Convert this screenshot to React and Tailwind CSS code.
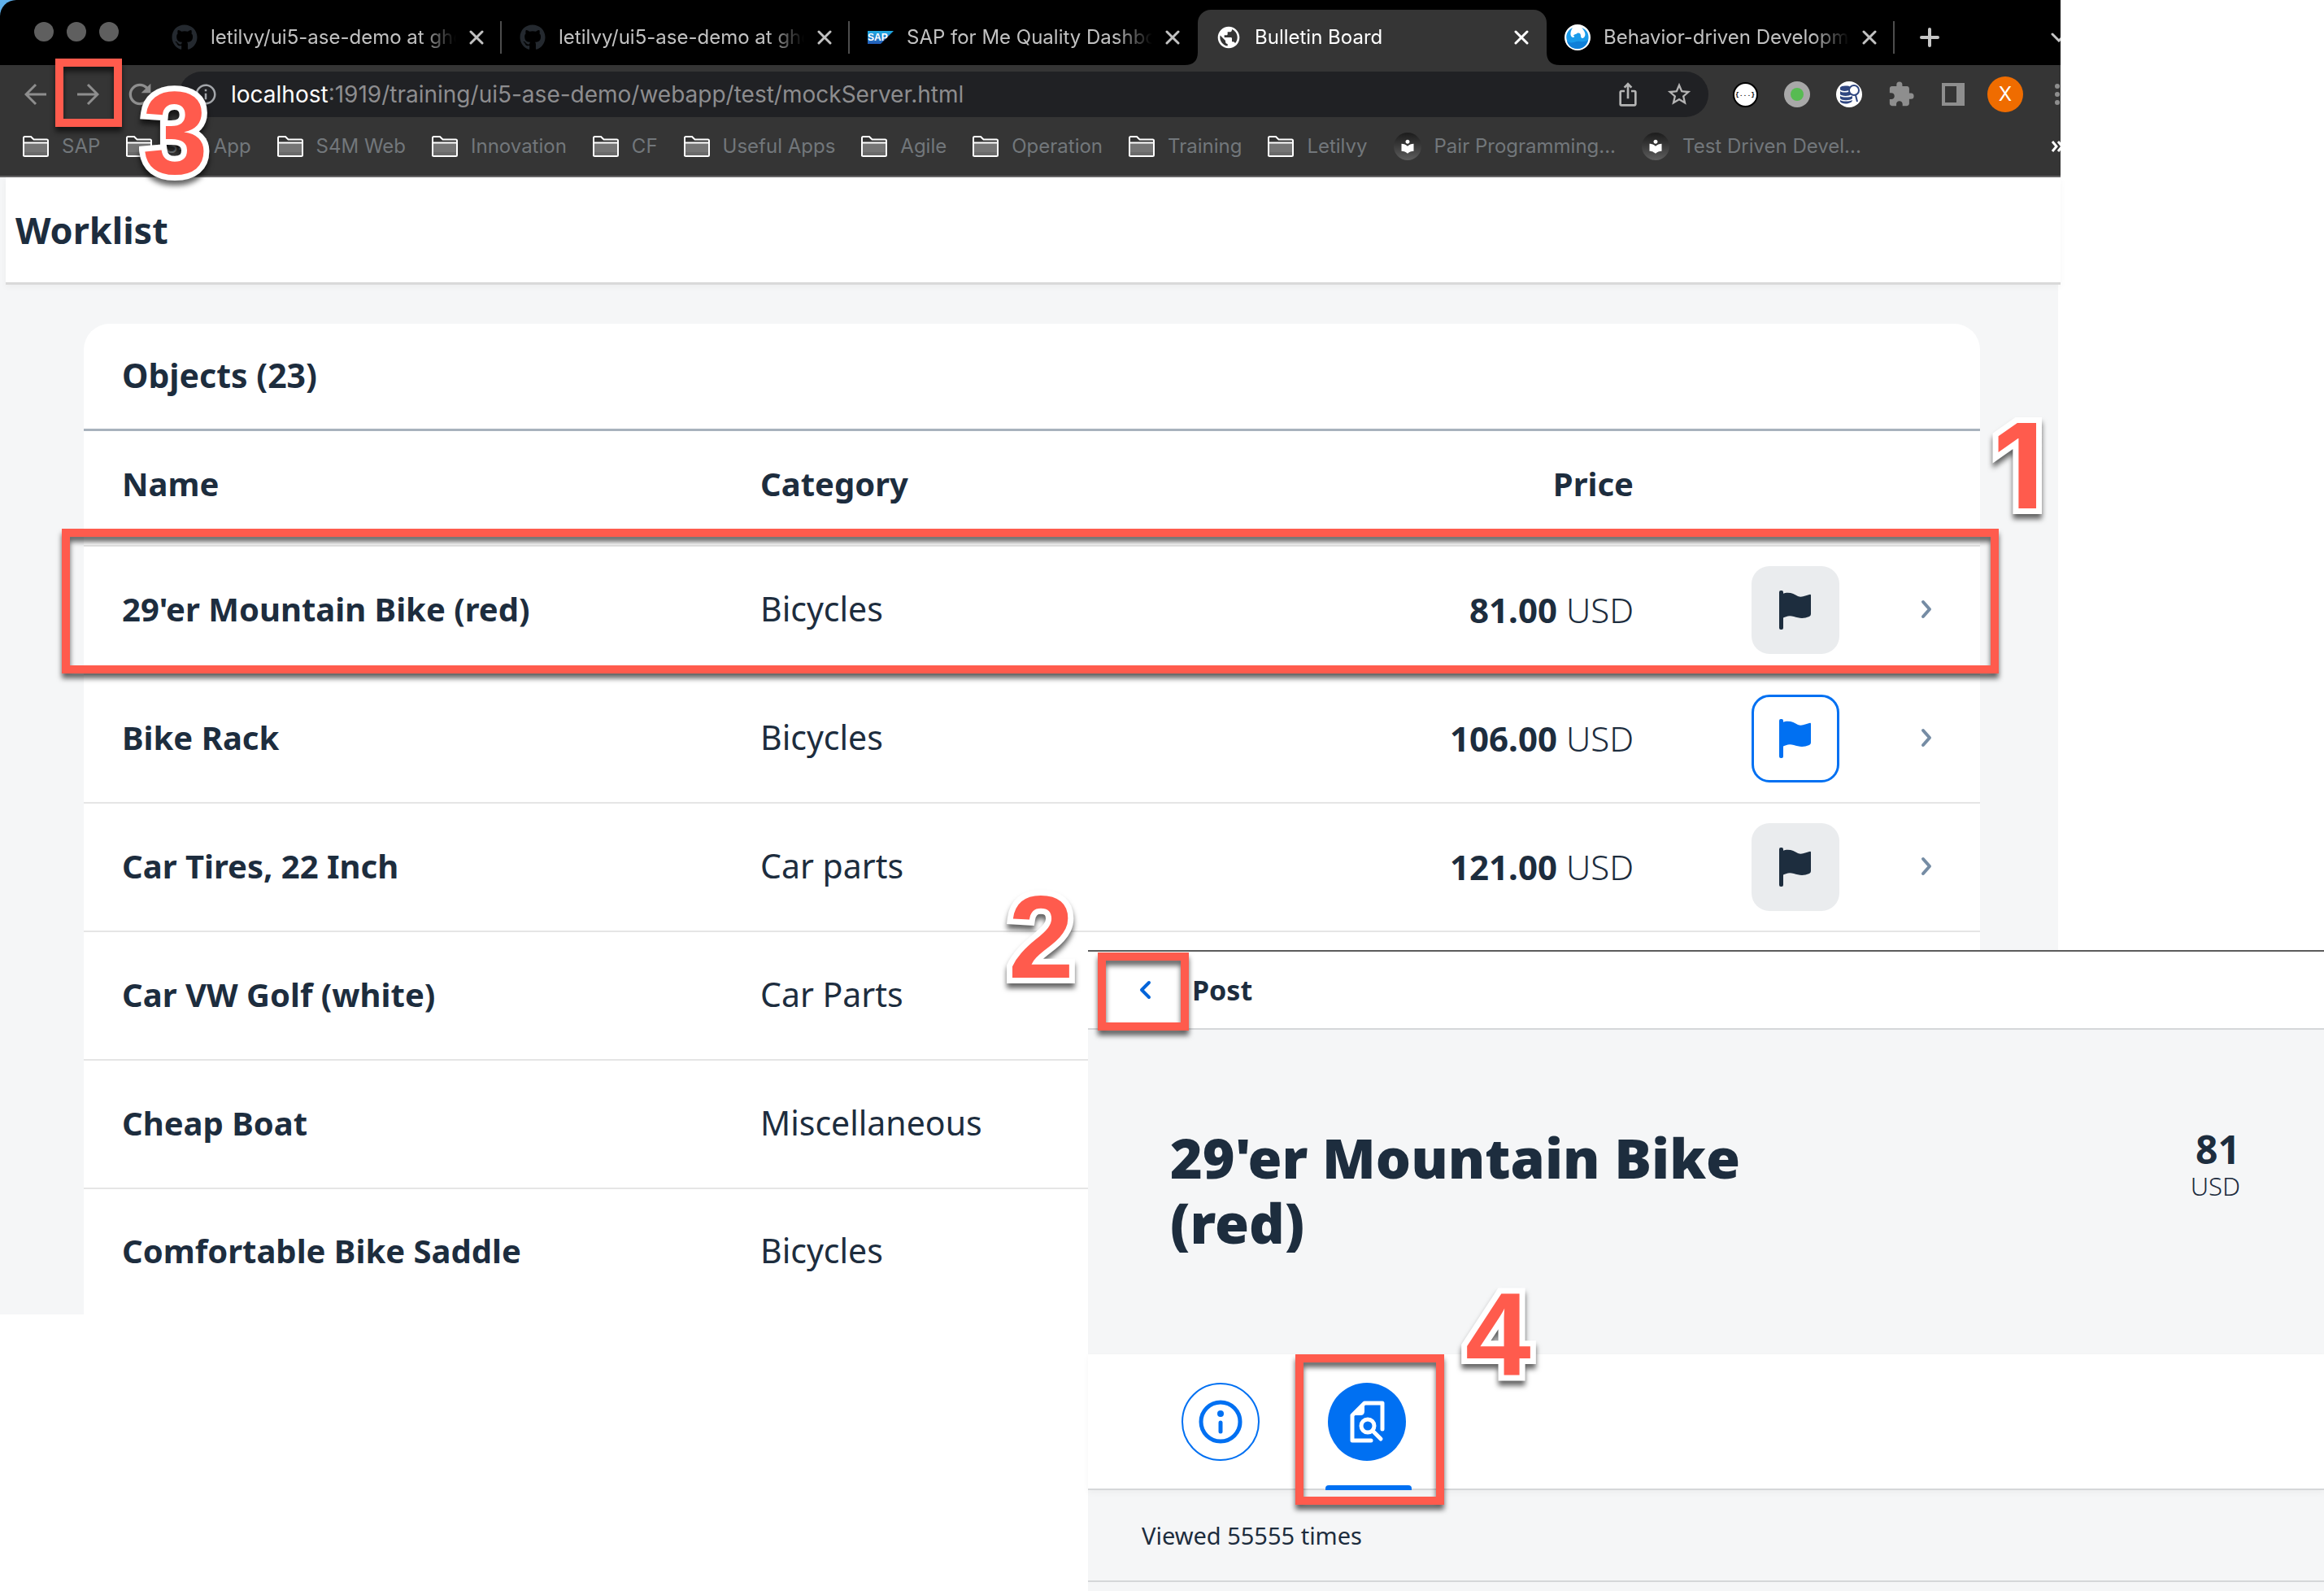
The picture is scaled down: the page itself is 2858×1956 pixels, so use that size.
import React from "react";
import { FaGithub } from "react-icons/fa";
import {
  MdExtension,
  MdInfoOutline,
  MdIosShare,
  MdLocalLibrary,
  MdPublic,
  MdRefresh,
  MdStarOutline,
} from "react-icons/md";

/* ---------- drawings ---------- */

const CloseIcon = () => (
  <svg viewBox="0 0 18 18" className="size-[18px]" stroke="currentColor" strokeWidth="3" strokeLinecap="round">
    <path d="M2 2l14 14M16 2L2 16" />
  </svg>
);

const ArrowIcon = ({ flip }) => (
  <svg viewBox="0 0 28 28" className="size-7" fill="none" stroke="currentColor" strokeWidth="3">
    {flip ? <path d="M1 14h24M14 2l12 12-12 12" /> : <path d="M27 14H3M14 2L2 14l12 12" />}
  </svg>
);

const FolderIcon = () => (
  <svg viewBox="0 0 32 26" className="h-[26px] w-8 shrink-0">
    <path d="M1 25V2.500Q1 1 2.500 1H10L13.500 4.500H29.500Q31 4.500 31 6V23.500Q31 25 29.500 25H2.500Q1 25 1 23.500Z" fill="#353535" stroke="#fff" strokeWidth="2" />
    <rect x="2" y="9" width="28" height="13" fill="#757575" />
    <rect x="2" y="20" width="28" height="4" fill="#6a6a6a" />
    <path d="M1 8.500H31" stroke="#fff" strokeWidth="2" />
  </svg>
);

const BookIcon = () => (
  <span className="grid size-[34px] shrink-0 place-items-center rounded-full bg-linear-to-b from-[#1c1c1c] to-[#5e5e5e] text-white">
    <MdLocalLibrary className="size-5" />
  </span>
);

const SapIcon = () => (
  <svg viewBox="0 0 32 16" className="h-4 w-8">
    <defs>
      <linearGradient id="sap" x1="0" y1="0" x2="0" y2="1">
        <stop offset="0" stopColor="#1fabe3" />
        <stop offset="1" stopColor="#2359b5" />
      </linearGradient>
    </defs>
    <path d="M0 0H32L16 16H0Z" fill="url(#sap)" />
    <text x="0" y="12" fontSize="12" fontWeight="700" fontFamily="Liberation Sans, sans-serif" fill="#fff">SAP</text>
  </svg>
);

const PhoenixIcon = () => (
  <svg viewBox="0 0 32 32" className="size-8">
    <circle cx="16" cy="16" r="16" fill="#fff" />
    <path d="M10 4C4 7 1.500 12 2.500 18C4 26 10 30 16 30C23 30 29 25 29.500 17C30 11 27 6 21 4C25 8 27 13 24 16C22 18 20 17 20 14C20 11 18 10 16 10.500C15 12 12 12 10.500 14C12 14 13 15 11 16C7 16 6 10 10 4Z" fill="#1a9bea" />
    <path d="M3 20C8 26 14 19 19 21C24 22 27 20 29 19C27 27 21 30 16 30C9 30 4 26 3 20Z" fill="#0f7fd8" />
  </svg>
);

const BracesIcon = () => (
  <span className="grid size-[31px] place-items-center rounded-full border-2 border-black bg-white font-['Liberation_Mono',monospace] text-[8px] leading-none font-bold text-black">
    {"{...}"}
  </span>
);

const RecorderIcon = () => (
  <svg viewBox="0 0 32 32" className="size-8">
    <circle cx="16" cy="16" r="16" fill="#a8a8a8" />
    <circle cx="16" cy="16" r="8" fill="#57bb52" />
  </svg>
);

const DatabaseSearchIcon = () => (
  <svg viewBox="0 0 32 32" className="size-8">
    <circle cx="16" cy="16" r="16" fill="#fff" />
    <g fill="#2f4680">
      <path d="M5 8c0-3 12-3 12-1v3c-3 3-12 2-12 0z" />
      <path d="M5 12c2 2 9 2 12 0l2 4c-4 3-13 2-14 0z" />
      <path d="M5 18c3 2 11 2 15 0v3c-3 3-13 3-15 0z" />
      <path d="M5 23c3 2 11 2 15 0c0 5-13 6-15 2z" />
    </g>
    <circle cx="22" cy="11" r="6" fill="#fff" stroke="#2f4680" strokeWidth="2" />
    <path d="M24 17l2 8" stroke="#2f4680" strokeWidth="2" />
  </svg>
);

const SidePanelIcon = () => (
  <svg viewBox="0 0 28 28" className="size-7" fill="#8e8e8e">
    <path fillRule="evenodd" d="M0 0H28V28H0ZM4 4V24H18V4Z" />
  </svg>
);

const FlagIcon = () => (
  <svg viewBox="0 0 40 48" className="h-12 w-10" fill="currentColor">
    <rect width="5" height="48" rx="2" />
    <path d="M4 4C12 1 18 4 23 7C28 9 33 6 37 5Q39 4 39 6V29Q39 31 37 32C30 35 24 34 18 32C12 30 8 32 4 34Z" />
  </svg>
);

const Chevron = ({ left }) => (
  <svg viewBox="0 0 16 24" className="h-6 w-4" fill="none" stroke="currentColor" strokeWidth="4" strokeLinecap="round" strokeLinejoin="round">
    <path d={left ? "M13 3L4 12l9 9" : "M4 3l8 9-8 9"} />
  </svg>
);

const InfoIcon = () => (
  <svg viewBox="0 0 54 54" className="size-[54px]" fill="none" stroke="currentColor" strokeWidth="5">
    <circle cx="27" cy="27" r="24" />
    <circle cx="27" cy="17" r="4" fill="currentColor" stroke="none" />
    <path d="M27 28V39" strokeLinecap="round" />
  </svg>
);

const InspectIcon = () => (
  <svg viewBox="0 0 44 54" className="h-[54px] w-11" fill="none" stroke="currentColor" strokeWidth="5" strokeLinecap="round" strokeLinejoin="round">
    <path d="M41 36V4H19L4 19V50H27" />
    <path d="M19 4V14Q19 19 14 19H4Z" fill="currentColor" stroke="none" />
    <circle cx="23" cy="32" r="8" />
    <path d="M29 38L39 48" />
  </svg>
);

const TabCorner = ({ right }) => (
  <svg viewBox="0 0 16 16" className={right ? "absolute bottom-0 left-full size-4" : "absolute right-full bottom-0 size-4"} fill="#353535">
    <path d={right ? "M0 0V16H16Q0 16 0 0Z" : "M16 0V16H0Q16 16 16 0Z"} />
  </svg>
);

/* ---------- annotations ---------- */

const Frame = ({ className }) => (
  <div className={`pointer-events-none absolute border-10 border-[#ff5b4d] drop-shadow-[0_6px_3px_rgba(0,0,0,0.6)] ${className}`} />
);

const Step = ({ className, children }) => (
  <span className={`pointer-events-none absolute text-[145px] leading-none font-bold text-[#ff5b4d] drop-shadow-[0_6px_3px_rgba(0,0,0,0.6)] [-webkit-text-stroke:14px_white] [paint-order:stroke_fill] [stroke-linejoin:round] ${className}`}>
    {children}
  </span>
);

/* ---------- browser ---------- */

const github = <FaGithub className="size-8 text-[#24292f]" />;
const tabs = [
  { icon: github, title: "letilvy/ui5-ase-demo at gherkin", divider: true },
  { icon: github, title: "letilvy/ui5-ase-demo at gherkin", divider: true },
  { icon: <SapIcon />, title: "SAP for Me Quality Dashboard" },
  { icon: <MdPublic className="size-8 text-white" />, title: "Bulletin Board", active: true },
  { icon: <PhoenixIcon />, title: "Behavior-driven Development", divider: true },
];

const bookmarks = ["SAP", "S4M App", "S4M Web", "Innovation", "CF", "Useful Apps", "Agile", "Operation", "Training", "Letilvy"];
const readings = ["Pair Programming...", "Test Driven Devel..."];

function TabStrip() {
  return (
    <div className="flex h-20 items-stretch overflow-hidden rounded-tl-[20px] bg-black pt-3">
      <div className="mr-[43px] ml-[42px] flex items-center gap-4 pb-[14px]">
        {["Close window", "Minimise", "Zoom"].map((l) => (
          <button key={l} aria-label={l} className="size-6 rounded-full bg-[#5f5f5f]" />
        ))}
      </div>
      {tabs.map((t, i) => (
        <div
          key={i}
          className={
            t.active
              ? "relative flex w-[429px] items-center gap-4 rounded-t-2xl bg-[#353535] px-[22px] text-white"
              : "relative flex w-[428px] items-center gap-4 px-[22px] text-[#c2c2c2]"
          }
        >
          {t.active && <TabCorner />}
          <span className="shrink-0">{t.icon}</span>
          <a href="#tab" className="min-w-0 flex-1 overflow-hidden text-2xl whitespace-nowrap [mask-image:linear-gradient(to_right,black_85%,transparent)]">
            {t.title}
          </a>
          <button aria-label={`Close ${t.title}`}>
            <CloseIcon />
          </button>
          {t.divider && <span className="absolute right-0 h-10 w-0.5 self-center bg-[#4d4d4d]" />}
          {t.active && <TabCorner right />}
        </div>
      ))}
      <button aria-label="New tab" className="ml-[31px] text-[#c6c6c6]">
        <svg viewBox="0 0 24 24" className="size-6" stroke="currentColor" strokeWidth="4" strokeLinecap="round">
          <path d="M2 12H22M12 2V22" />
        </svg>
      </button>
      <button aria-label="Search tabs" className="-mr-2 ml-auto text-[#c6c6c6]">
        <svg viewBox="0 0 20 12" className="h-3 w-5" fill="none" stroke="currentColor" strokeWidth="3" strokeLinecap="round">
          <path d="M2 2l8 8 8-8" />
        </svg>
      </button>
    </div>
  );
}

function Toolbar() {
  const side = "grid w-16 shrink-0 place-items-center";
  return (
    <div className="flex h-[72px] items-center overflow-hidden pl-3 text-[#8e8e8e]">
      <button aria-label="Back" className={side}><ArrowIcon /></button>
      <button aria-label="Forward" className={side}><ArrowIcon flip /></button>
      <button aria-label="Reload" className={side}><MdRefresh className="size-10" /></button>
      <div className="ml-4 flex h-14 flex-1 items-center rounded-full bg-[#202124] pr-[19px] pl-[18px] text-[28px] text-[#8d8d8f]">
        <MdInfoOutline className="mr-4 size-[30px] text-[#a3a6aa]" />
        <label htmlFor="address" className="text-white">localhost</label>
        <input
          id="address"
          readOnly
          defaultValue=":1919/training/ui5-ase-demo/webapp/test/mockServer.html"
          className="min-w-0 flex-1 bg-transparent outline-none"
        />
        <button aria-label="Share" className="text-[#b4b4b4]"><MdIosShare className="size-8" /></button>
        <button aria-label="Bookmark this page" className="ml-[30px] text-[#b4b4b4]"><MdStarOutline className="size-[34px]" /></button>
      </div>
      <button aria-label="JSON formatter" className={`ml-[13px] ${side}`}><BracesIcon /></button>
      <button aria-label="Recorder" className={side}><RecorderIcon /></button>
      <button aria-label="Data search" className={side}><DatabaseSearchIcon /></button>
      <button aria-label="Extensions" className={side}><MdExtension className="size-[34px]" /></button>
      <button aria-label="Side panel" className={side}><SidePanelIcon /></button>
      <button aria-label="Profile" className={side}>
        <span className="grid size-11 place-items-center rounded-full bg-[#ef6c00] text-2xl leading-none text-white">X</span>
      </button>
      <button aria-label="Menu" className={`-mr-[28px] ${side}`}>
        <svg viewBox="0 0 6 26" className="h-[26px] w-1.5" fill="currentColor">
          <circle cx="3" cy="3" r="3" /><circle cx="3" cy="13" r="3" /><circle cx="3" cy="23" r="3" />
        </svg>
      </button>
    </div>
  );
}

function BookmarkBar() {
  return (
    <nav className="flex h-16 items-center gap-8 overflow-hidden pb-2 pl-7 text-2xl whitespace-nowrap text-[#72777b]">
      {bookmarks.map((b) => (
        <a key={b} href="#folder" className="flex items-center gap-4"><FolderIcon />{b}</a>
      ))}
      {readings.map((b) => (
        <a key={b} href="#page" className="flex items-center gap-4"><BookIcon />{b}</a>
      ))}
      <button aria-label="More bookmarks" className="-mr-1 ml-auto text-white">
        <svg viewBox="0 0 16 14" className="h-[14px] w-4" fill="none" stroke="currentColor" strokeWidth="3">
          <path d="M2 1l5 6-5 6M9 1l5 6-5 6" />
        </svg>
      </button>
    </nav>
  );
}

/* ---------- worklist ---------- */

const rows = [
  { name: "29'er Mountain Bike (red)", category: "Bicycles", price: "81.00" },
  { name: "Bike Rack", category: "Bicycles", price: "106.00", flagged: true },
  { name: "Car Tires, 22 Inch", category: "Car parts", price: "121.00" },
  { name: "Car VW Golf (white)", category: "Car Parts" },
  { name: "Cheap Boat", category: "Miscellaneous" },
  { name: "Comfortable Bike Saddle", category: "Bicycles" },
];

function Worklist() {
  const line = "border-b-2 border-[#e5e5e5]";
  return (
    <main className="mr-[3px] bg-[#f5f6f7] font-['Noto_Sans',sans-serif] text-[#1d2d3e]">
      <header className="ml-[7px] -mr-[3px] flex h-[132px] items-center border-b-3 border-[#d9d9d9] bg-white pl-3 shadow-[0_3px_8px_rgba(0,0,0,0.04)]">
        <h1 className="text-[45px] font-bold">Worklist</h1>
      </header>
      <div className="pt-12 pr-24 pl-[103px]">
        <section className="rounded-t-[32px] bg-white">
          <h2 className="flex h-[132px] items-center border-b-3 border-[#a8b2bd] px-[47px] pb-0.5 text-[41px] font-bold">Objects (23)</h2>
          <table className="w-full table-fixed border-separate border-spacing-0 text-left">
            <colgroup>
              <col className="w-[785px]" />
              <col className="w-[785px]" />
              <col />
              <col className="w-[247px]" />
              <col className="w-[132px]" />
            </colgroup>
            <thead>
              <tr className="h-[142px] text-[40px]">
                <th className={`px-[47px] pb-[10px] font-bold ${line}`}>Name</th>
                <th className={`px-[47px] pb-[10px] font-bold ${line}`}>Category</th>
                <th className={`px-[47px] pb-[10px] text-right font-bold ${line}`}>Price</th>
                <th className={line} aria-label="Flag" />
                <th className={line} aria-label="Open" />
              </tr>
            </thead>
            <tbody>
              {rows.map((r, i) => {
                const last = i === rows.length - 1;
                const b = last ? "" : line;
                return (
                  <tr key={r.name} className={last ? "h-[154px]" : "h-[158px]"}>
                    <td className={`px-[47px] pb-0.5 text-[40px] font-bold ${b}`}>{r.name}</td>
                    <td className={`px-[47px] pb-0.5 text-[41px] ${b}`}>{r.category}</td>
                    <td className={`px-[47px] pb-0.5 text-right text-[42px] whitespace-nowrap ${b}`}>
                      {r.price && (<><b className="font-bold">{r.price}</b> <span className="font-light">USD</span></>)}
                    </td>
                    <td className={`pl-[98px] ${b}`}>
                      {r.price && (
                        <button
                          aria-label={`Flag ${r.name}`}
                          aria-pressed={!!r.flagged}
                          className={
                            r.flagged
                              ? "grid size-[108px] place-items-center rounded-[22px] border-3 border-[#0070f2] bg-white text-[#0070f2]"
                              : "grid size-[108px] place-items-center rounded-[22px] bg-[#eaecee] text-[#1d2d3e]"
                          }
                        >
                          <FlagIcon />
                        </button>
                      )}
                    </td>
                    <td className={`pb-0.5 ${b}`}>
                      {r.price && (
                        <a href="#object" aria-label={`Open ${r.name}`} className="flex justify-center text-[#758ca4]"><Chevron /></a>
                      )}
                    </td>
                  </tr>
                );
              })}
            </tbody>
          </table>
        </section>
      </div>
    </main>
  );
}

/* ---------- post ---------- */

function Post() {
  return (
    <aside className="absolute top-[1168px] right-0 left-[1338px] border-t-2 border-[#5c5c5c] bg-[#f5f6f7] font-['Noto_Sans',sans-serif] text-[#1d2d3e]">
      <header className="relative flex h-24 items-center border-b-2 border-[#d5d7d9] bg-white pl-3">
        <button aria-label="Back to worklist" className="grid h-full w-[116px] place-items-center text-[#0064d9]"><Chevron left /></button>
        <h2 className="text-[34px] font-bold">Post</h2>
        <Frame className="top-px left-3 h-24 w-28" />
      </header>
      <div className="flex items-start justify-between pt-[117px] pr-[103px] pb-[122px] pl-[101px]">
        <h1 className="max-w-[760px] text-[68px] leading-[80px] font-black">29'er Mountain Bike (red)</h1>
        <div className="pt-1 text-right">
          <div className="text-[48px] leading-[52px] font-bold">81</div>
          <div className="text-[31px] leading-[38px] font-light">USD</div>
        </div>
      </div>
      <div className="relative flex h-[167px] items-start gap-[84px] border-b-2 border-[#d5d7d9] bg-white pt-[35px] pl-[115px] shadow-[0_3px_8px_rgba(0,0,0,0.04)]">
        <button aria-label="Details" className="grid size-24 place-items-center rounded-full border-2 border-[#0070f2] text-[#0070f2]"><InfoIcon /></button>
        <button aria-label="Statistics" className="relative grid size-24 place-items-center rounded-full bg-[#0070f2] text-white">
          <InspectIcon />
          <span className="absolute top-[126px] -left-[3px] h-1.5 w-[106px] rounded-t bg-[#0070f2]" />
        </button>
        <Frame className="top-0 left-[255px] h-[185px] w-[183px]" />
      </div>
      <p className="flex h-[113px] items-center border-b-2 border-[#d5d7d9] pl-[66px] text-[29px]">Viewed 55555 times</p>
      <div className="h-[11px]" />
    </aside>
  );
}

export default function App() {
  return (
    <div className="relative min-h-screen overflow-hidden bg-white font-['Inter',sans-serif]">
      <div className="relative mr-[324px]">
        <div className="bg-[#5fb0ea]">
          <TabStrip />
          <div className="border-b-2 border-[#666566] bg-[#353535]">
            <Toolbar />
            <BookmarkBar />
          </div>
        </div>
        <Worklist />
        <Frame className="top-[72px] left-[68px] h-[84px] w-[82px]" />
        <Frame className="top-[650px] right-[76px] left-[76px] h-[178px]" />
      </div>
      <Post />
      <Step className="top-[500px] left-[2451px] font-['Inter',sans-serif]">1</Step>
      <Step className="top-[1080px] left-[1240px] font-['Liberation_Sans',sans-serif]">2</Step>
      <Step className="top-[91px] left-[175px] font-['Liberation_Sans',sans-serif]">3</Step>
      <Step className="top-[1568px] left-[1802px] font-['Liberation_Sans',sans-serif]">4</Step>
    </div>
  );
}
